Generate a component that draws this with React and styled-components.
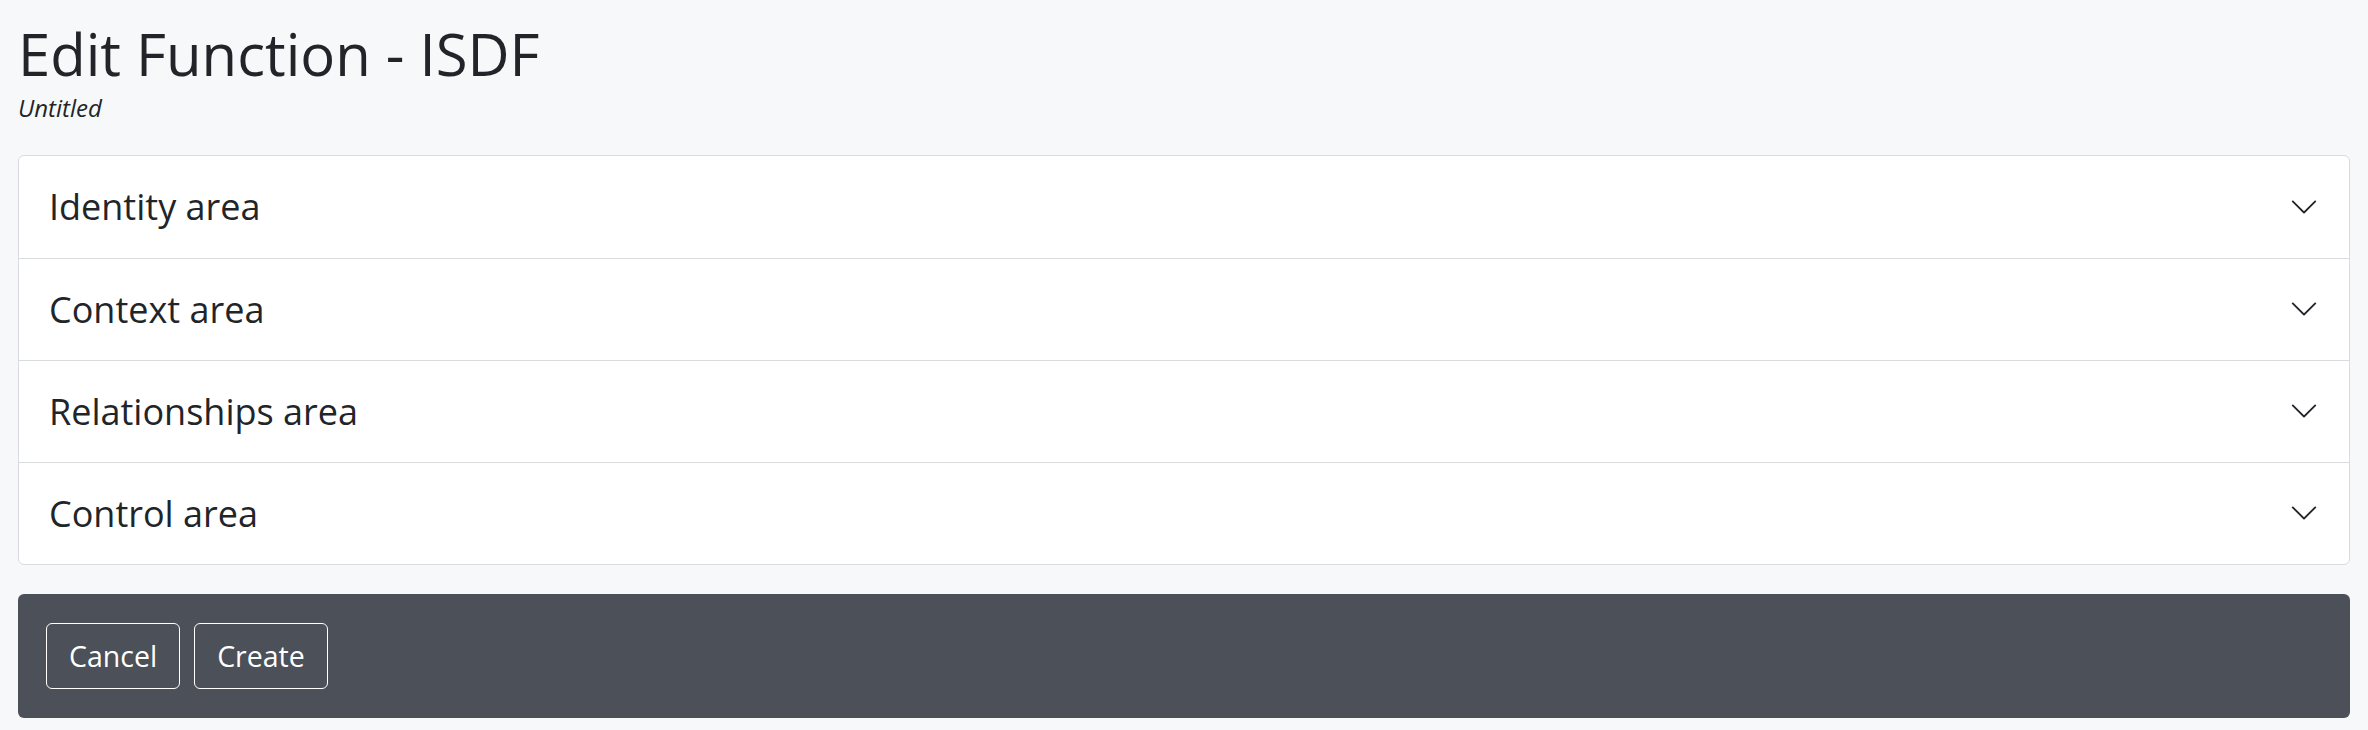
import React from 'react';
import styled, { createGlobalStyle } from 'styled-components';

const GlobalStyle = createGlobalStyle`
  body {
    margin: 0;
    background: #f7f8fa;
    font-family: 'Open Sans', 'Liberation Sans', sans-serif;
    color: #212529;
  }
`;

const Page = styled.div`
  padding: 19px 18px 14px;
`;

const Header = styled.header`
  margin-bottom: 32px;
`;

const Title = styled.h1`
  font-size: 58px;
  font-weight: 400;
  line-height: 1.2;
  margin: 0;
`;

const Subtitle = styled.div`
  font-size: 24px;
  font-style: italic;
  line-height: 1.3;
  margin-top: 3px;
`;

const Accordion = styled.div`
  background: #fff;
  border: 1px solid #d9dbde;
  border-radius: 6px;
  overflow: hidden;
`;

const Section = styled.button`
  display: flex;
  align-items: center;
  justify-content: space-between;
  width: 100%;
  height: 102px;
  padding: 0 30px;
  border: 0;
  border-top: ${(p) => (p.$first ? '0' : '1px solid #d9dbde')};
  background: transparent;
  font-family: inherit;
  font-size: 36px;
  color: #212529;
  text-align: left;
  cursor: pointer;
`;

const Chevron = () => (
  <svg width="30" height="30" viewBox="0 0 16 16" fill="#212529">
    <path d="M1.646 4.646a.5.5 0 0 1 .708 0L8 10.293l5.646-5.647a.5.5 0 0 1 .708.708l-6 6a.5.5 0 0 1-.708 0l-6-6a.5.5 0 0 1 0-.708z" />
  </svg>
);

const ActionBar = styled.div`
  display: flex;
  gap: 14px;
  margin-top: 29px;
  padding: 29px 28px;
  background: #4c5058;
  border-radius: 6px;
`;

const Button = styled.button`
  height: 66px;
  padding: 0 22px;
  background: transparent;
  border: 1.5px solid #fff;
  border-radius: 6px;
  color: #fff;
  font-family: inherit;
  font-size: 28.5px;
  cursor: pointer;
`;

const sections = ['Identity area', 'Context area', 'Relationships area', 'Control area'];

export default function App() {
  return (
    <>
      <GlobalStyle />
      <Page>
        <Header>
          <Title>Edit Function - ISDF</Title>
          <Subtitle>Untitled</Subtitle>
        </Header>
        <Accordion>
          {sections.map((s, i) => (
            <Section key={s} $first={i === 0}>
              {s}
              <Chevron />
            </Section>
          ))}
        </Accordion>
        <ActionBar>
          <Button>Cancel</Button>
          <Button>Create</Button>
        </ActionBar>
      </Page>
    </>
  );
}
